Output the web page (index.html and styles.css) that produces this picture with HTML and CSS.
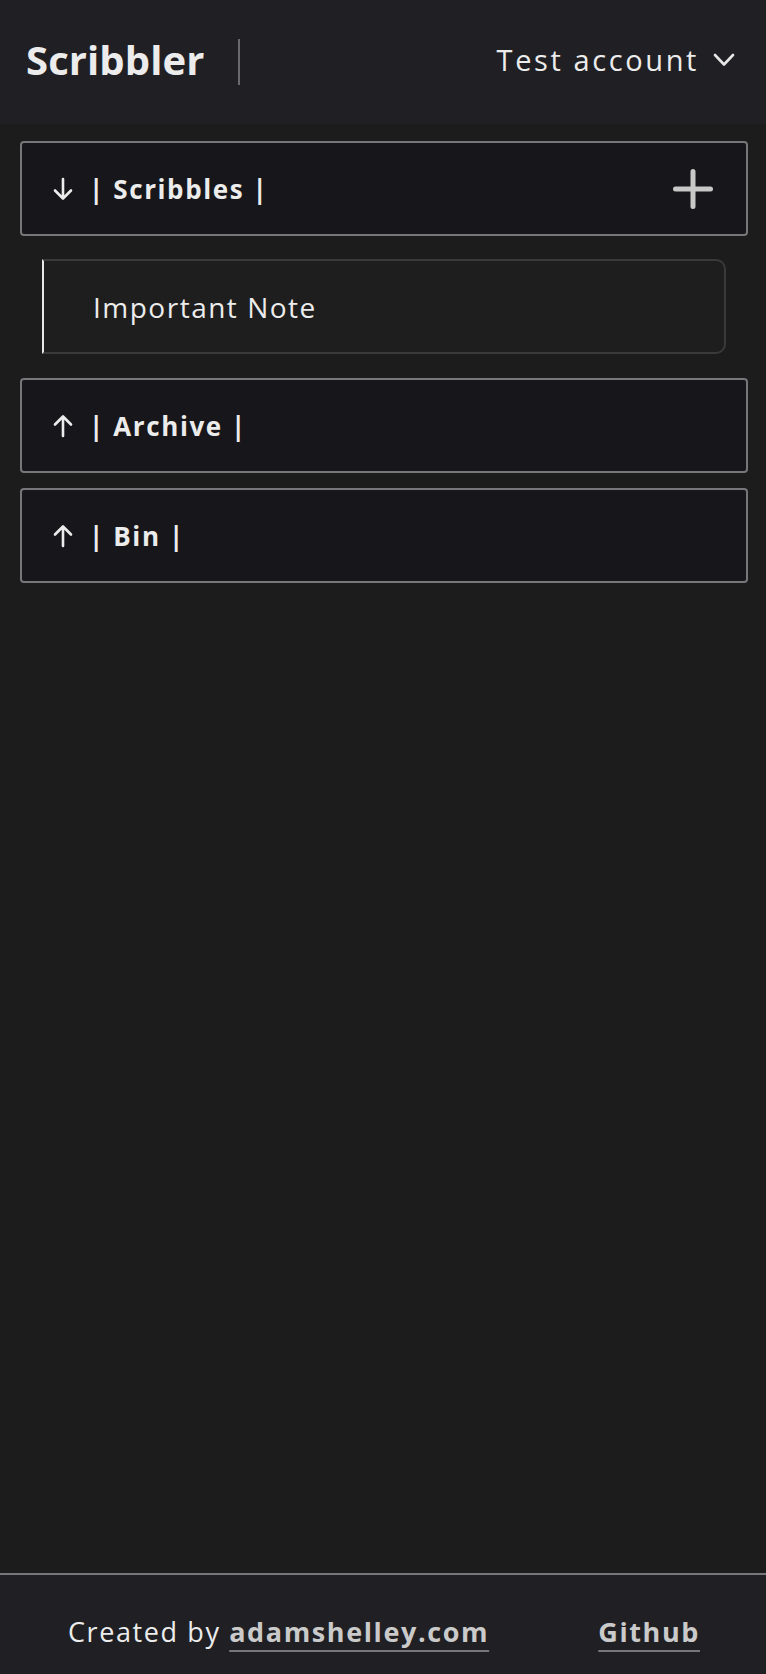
FILE: index.html
```html
<!DOCTYPE html>
<html lang="en">
<head>
<meta charset="utf-8">
<title>Scribbler</title>
<link rel="stylesheet" href="styles.css">
</head>
<body>
<div class="page">
  <header class="header">
    <div class="brand">
      <span class="logo">Scribbler</span>
      <span class="divider"></span>
    </div>
    <div class="account">
      <span class="account-name">Test account</span>
      <svg class="chevron" width="22" height="14" viewBox="0 0 22 14" fill="none" stroke="#e6e6e6" stroke-width="2.6" stroke-linecap="round" stroke-linejoin="round"><path d="M2 2 L11 11.5 L20 2"/></svg>
    </div>
  </header>

  <main class="main">
    <section class="folder">
      <div class="folder-title">
        <svg class="arrow" width="20" height="24" viewBox="0 0 20 24" fill="none" stroke="#ececec" stroke-width="2.6" stroke-linecap="round" stroke-linejoin="round"><path d="M10 2 V21 M2 13.5 L10 21.5 L18 13.5"/></svg>
        <span class="folder-name">| Scribbles |</span>
      </div>
      <svg class="plus" width="40" height="40" viewBox="0 0 40 40" fill="none" stroke="#c8c8c8" stroke-width="5" stroke-linecap="round"><path d="M20 2.5 V37.5 M2.5 20 H37.5"/></svg>
    </section>

    <div class="note">
      <span class="note-title">Important Note</span>
    </div>

    <section class="folder">
      <div class="folder-title">
        <svg class="arrow" width="20" height="24" viewBox="0 0 20 24" fill="none" stroke="#ececec" stroke-width="2.6" stroke-linecap="round" stroke-linejoin="round"><path d="M10 22 V3 M2 10.5 L10 2.5 L18 10.5"/></svg>
        <span class="folder-name">| Archive |</span>
      </div>
    </section>

    <section class="folder folder-last">
      <div class="folder-title">
        <svg class="arrow" width="20" height="24" viewBox="0 0 20 24" fill="none" stroke="#ececec" stroke-width="2.6" stroke-linecap="round" stroke-linejoin="round"><path d="M10 22 V3 M2 10.5 L10 2.5 L18 10.5"/></svg>
        <span class="folder-name">| Bin |</span>
      </div>
    </section>
  </main>

  <footer class="footer">
    <span class="credit">Created by <a class="link" href="#">adamshelley.com</a></span>
    <a class="link" href="#">Github</a>
  </footer>
</div>
</body>
</html>
```

FILE: styles.css
```css
* {
  box-sizing: border-box;
}

html, body {
  margin: 0;
  padding: 0;
}

body {
  background: #1c1c1c;
  color: #ececec;
  font-family: "Open Sans", "DejaVu Sans", sans-serif;
}

.page {
  min-height: 100vh;
  display: flex;
  flex-direction: column;
}

.header {
  height: 124px;
  background: #202024;
  display: flex;
  align-items: center;
  justify-content: space-between;
  padding: 0 31px 6px 26px;
}

.brand {
  display: flex;
  align-items: center;
}

.logo {
  font-size: 40px;
  font-weight: 700;
  color: #ececec;
  letter-spacing: 0.1px;
}

.divider {
  width: 2px;
  height: 46px;
  background: #6a6a6e;
  margin-left: 33px;
  margin-top: 6px;
}

.account {
  display: flex;
  align-items: center;
  gap: 14px;
}

.account-name {
  font-size: 29px;
  letter-spacing: 2.6px;
  color: #ececec;
}

.chevron {
  display: block;
  margin-top: 2px;
}

.main {
  flex: 1;
  padding: 17px 18px 0 20px;
  display: flex;
  flex-direction: column;
}

.folder {
  height: 95px;
  background: #17171b;
  border: 2px solid #77777a;
  border-radius: 4px;
  display: flex;
  align-items: center;
  justify-content: space-between;
  padding: 0 33px 0 31px;
  margin-bottom: 15px;
}

.folder-title {
  display: flex;
  align-items: center;
  gap: 16px;
}

.arrow {
  display: block;
}

.folder-name {
  font-size: 26px;
  font-weight: 700;
  letter-spacing: 1.6px;
  color: #ececec;
}

.plus {
  display: block;
}

.note {
  height: 95px;
  margin: 8px 22px 24px 22px;
  background: #1e1e1e;
  border: 2px solid #3a3a3a;
  border-left-color: #e8e8e8;
  border-radius: 0 10px 10px 0;
  display: flex;
  align-items: center;
  padding-left: 49px;
}

.note-title {
  font-size: 28px;
  letter-spacing: 1.5px;
  color: #ececec;
}

.footer {
  height: 101px;
  background: #202024;
  border-top: 2px solid #77777a;
  display: flex;
  align-items: center;
  justify-content: space-between;
  padding: 14px 66px 0 68px;
  font-size: 27px;
  letter-spacing: 1.6px;
}

.credit {
  color: #ececec;
}

.link {
  color: #cacaca;
  font-weight: 700;
  text-decoration: underline;
  text-decoration-color: #77777a;
  text-decoration-thickness: 2px;
  text-underline-offset: 8px;
}
```
